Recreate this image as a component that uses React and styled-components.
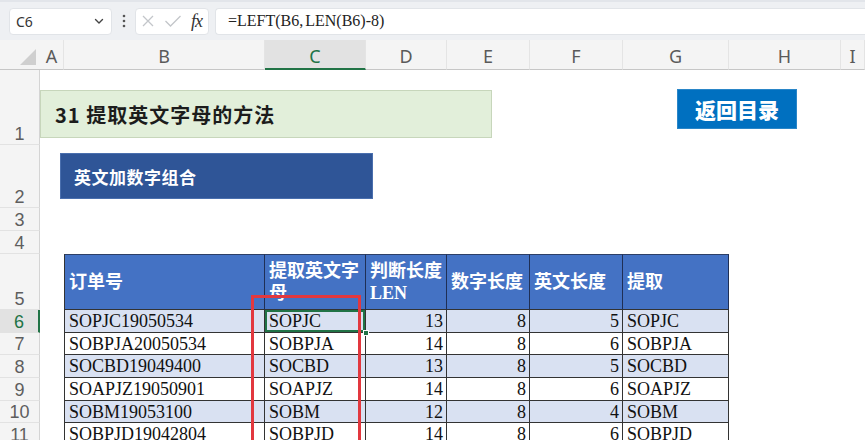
import React from 'react';
import styled, { createGlobalStyle, css } from 'styled-components';

const GlobalStyle = createGlobalStyle`
  * { box-sizing: border-box; }
  html, body { margin: 0; padding: 0; background: #ffffff; }
  body { width: 865px; height: 440px; overflow: hidden; }
`;

const UI_FONT = `"Noto Sans", "Liberation Sans", "Noto Sans CJK SC", sans-serif`;
const NUM_FONT = `"Liberation Sans", "Noto Sans", sans-serif`;
const CELL_FONT = `"Liberation Serif", "Noto Sans CJK SC", serif`;
const CJK_FONT = `"Noto Sans CJK SC", "Noto Sans", sans-serif`;

const COLS = ['A', 'B', 'C', 'D', 'E', 'F', 'G', 'H', 'I'];
const COL_WIDTHS = [24, 201, 101, 81, 83, 93, 106, 112];
const ROW_HEIGHTS = [75, 63, 23, 23, 56, 23, 22, 23, 23, 22, 23, 23];

const Page = styled.div`
  width: 865px;
  height: 440px;
  display: flex;
  flex-direction: column;
  overflow: hidden;
  background: #ffffff;
`;

const TopBar = styled.div`
  height: 40px;
  flex: none;
  display: flex;
  align-items: center;
  padding-left: 9px;
  background: #eef0f3;
  border-top: 2px solid #e2e5ea;
`;

const Field = styled.div`
  height: 27px;
  background: #ffffff;
  border: 1px solid #e1e4e8;
  border-radius: 4px;
  display: flex;
  align-items: center;
`;

const NameBox = styled(Field)`
  width: 103px;
  padding: 0 6px 0 6px;
  justify-content: space-between;
  font-family: ${UI_FONT};
  font-size: 14px;
  color: #333;
`;

const Dots = styled.div`
  width: 23px;
  display: flex;
  justify-content: center;
`;

const FuncBox = styled(Field)`
  width: 74px;
  padding: 0 5px;
  justify-content: space-between;
`;

const Fx = styled.span`
  font-family: "Liberation Serif", serif;
  font-style: italic;
  font-size: 18px;
  color: #333;
  margin-right: 1px;
  letter-spacing: -1px;
`;

const FormulaBox = styled(Field)`
  flex: 1;
  margin-left: 6px;
  border-radius: 4px 0 0 4px;
  border-right: none;
  padding-left: 12px;
  font-family: "Liberation Serif", serif;
  font-size: 16px;
  color: #222;
  word-spacing: -2px;
`;

const Sheet = styled.div`
  position: relative;
  flex: 1;
  display: grid;
  grid-template-columns: 40px ${COL_WIDTHS.map((w) => `${w}px`).join(' ')} 1fr;
  grid-template-rows: 30px ${ROW_HEIGHTS.map((h) => `${h}px`).join(' ')};
  background: #ffffff;
`;

const Corner = styled.div`
  background: #f4f4f4;
  border-bottom: 1px solid #c6c6c6;
  display: flex;
  align-items: flex-end;
  justify-content: flex-end;
  padding: 0 4px 4px 0;
`;

const ColHead = styled.div`
  background: ${({ $active }) => ($active ? '#e2e2e2' : '#f4f4f4')};
  border-bottom: ${({ $active }) => ($active ? '2px solid #217346' : '1px solid #c6c6c6')};
  border-right: 1px solid #e4e4e4;
  display: flex;
  align-items: center;
  justify-content: center;
  font-family: ${UI_FONT};
  font-size: 18px;
  color: ${({ $active }) => ($active ? '#217346' : '#5a5a5a')};
  padding-top: 3px;
`;

const RowHead = styled.div`
  background: ${({ $active }) => ($active ? '#e2e2e2' : '#f4f4f4')};
  border-right: ${({ $active }) => ($active ? '2px solid #217346' : '1px solid #d4d4d4')};
  border-bottom: 1px solid #e2e2e2;
  display: flex;
  align-items: flex-end;
  justify-content: center;
  font-family: ${NUM_FONT};
  font-size: 18px;
  line-height: 20px;
  color: ${({ $active }) => ($active ? '#217346' : '#5e5e5e')};
`;

const Blank = styled.div``;

const Cell = styled.div`
  position: relative;
  display: flex;
  align-items: center;
  padding: 0 3px 0 4px;
  font-family: ${CELL_FONT};
  font-size: 18px;
  line-height: 20px;
  color: #111;
  white-space: nowrap;
  border-right: 1px solid #333;
  border-bottom: 1px solid #333;
  background: ${({ $shade }) => ($shade ? '#d9e1f2' : '#ffffff')};
  justify-content: ${({ $num }) => ($num ? 'flex-end' : 'flex-start')};
  ${({ $first }) => $first && css`border-left: 1px solid #333;`}
  ${({ $head }) => $head && css`
    background: #4472c4;
    color: #ffffff;
    font-weight: bold;
    white-space: normal;
    line-height: 22px;
    border-top: 1px solid #2d3f66;
    border-right-color: #1f2f55;
    justify-content: flex-start;
  `}
  ${({ $selected }) => $selected && css`
    box-shadow: inset 0 0 0 2px #217346;
  `}
`;

const Handle = styled.span`
  position: absolute;
  right: -4px;
  bottom: -4px;
  width: 6px;
  height: 6px;
  background: #217346;
  border: 1px solid #ffffff;
  z-index: 3;
`;

const TitleShape = styled.div`
  position: absolute;
  left: 40px;
  top: 50px;
  width: 452px;
  height: 48px;
  background: #e2efda;
  border: 1px solid #c7d6bb;
  display: flex;
  align-items: center;
  padding-left: 14px;
  font-family: ${CJK_FONT};
  font-weight: bold;
  font-size: 20px;
  letter-spacing: 1px;
  color: #1c1c1c;
`;

const SectionShape = styled.div`
  position: absolute;
  left: 60px;
  top: 113px;
  width: 313px;
  height: 46px;
  background: #2f5597;
  border: 1px solid #4a6fae;
  display: flex;
  align-items: center;
  padding-left: 13px;
  font-family: ${CJK_FONT};
  font-weight: bold;
  font-size: 17px;
  letter-spacing: 0.5px;
  color: #ffffff;
`;

const BackButton = styled.div`
  position: absolute;
  left: 677px;
  top: 49px;
  width: 120px;
  height: 40px;
  background: #0070c0;
  border: 1px solid #2a86c8;
  display: flex;
  align-items: center;
  justify-content: center;
  font-family: ${CJK_FONT};
  font-weight: 900;
  font-size: 21px;
  color: #ffffff;
`;

const Highlight = styled.div`
  position: absolute;
  left: 251px;
  top: 255px;
  width: 110px;
  height: 200px;
  border: 3px solid #e2383f;
  pointer-events: none;
  z-index: 4;
`;

const HEADERS = [
  { text: '订单号' },
  { text: <>提取英文字<br />母</> },
  { text: <>判断长度<br />LEN</> },
  { text: '数字长度' },
  { text: '英文长度' },
  { text: '提取' },
];

const ROWS = [
  ['SOPJC19050534', 'SOPJC', 13, 8, 5, 'SOPJC'],
  ['SOBPJA20050534', 'SOBPJA', 14, 8, 6, 'SOBPJA'],
  ['SOCBD19049400', 'SOCBD', 13, 8, 5, 'SOCBD'],
  ['SOAPJZ19050901', 'SOAPJZ', 14, 8, 6, 'SOAPJZ'],
  ['SOBM19053100', 'SOBM', 12, 8, 4, 'SOBM'],
  ['SOBPJD19042804', 'SOBPJD', 14, 8, 6, 'SOBPJD'],
  ['SOCBD19050211', 'SOCBD', 13, 8, 5, 'SOCBD'],
];

function Chevron() {
  return (
    <svg width="12" height="12" viewBox="0 0 12 12">
      <path d="M2.5 4.5 L6 8 L9.5 4.5" fill="none" stroke="#444" strokeWidth="1.4" strokeLinecap="round" strokeLinejoin="round" />
    </svg>
  );
}

function VDots() {
  return (
    <svg width="4" height="14" viewBox="0 0 4 14">
      <circle cx="2" cy="2" r="1.3" fill="#555" />
      <circle cx="2" cy="7" r="1.3" fill="#555" />
      <circle cx="2" cy="12" r="1.3" fill="#555" />
    </svg>
  );
}

function Cross() {
  return (
    <svg width="14" height="14" viewBox="0 0 14 14">
      <path d="M2 2 L12 12 M12 2 L2 12" stroke="#c3c6ca" strokeWidth="1.3" fill="none" />
    </svg>
  );
}

function Check() {
  return (
    <svg width="18" height="14" viewBox="0 0 18 14">
      <path d="M1.5 7 L6.5 12 L16.5 2" stroke="#c3c6ca" strokeWidth="1.3" fill="none" />
    </svg>
  );
}

function CornerMark() {
  return (
    <svg width="16" height="16" viewBox="0 0 16 16">
      <polygon points="16,0 16,16 0,16" fill="#cfcfcf" />
    </svg>
  );
}

function tableRow(rowNum) {
  // rows 5..11 hold the table in columns B..G
  if (rowNum === 5) {
    return HEADERS.map((h, i) => (
      <Cell key={i} $head $first={i === 0}>{h.text}</Cell>
    ));
  }
  const data = ROWS[rowNum - 6];
  const shade = rowNum % 2 === 0;
  return data.map((v, i) => (
    <Cell
      key={i}
      $first={i === 0}
      $shade={shade}
      $num={typeof v === 'number'}
      $selected={rowNum === 6 && i === 1}
    >
      {v}
      {rowNum === 6 && i === 1 && <Handle />}
    </Cell>
  ));
}

export default function App() {
  return (
    <Page>
      <GlobalStyle />
      <TopBar>
        <NameBox>
          <span>C6</span>
          <Chevron />
        </NameBox>
        <Dots><VDots /></Dots>
        <FuncBox>
          <Cross />
          <Check />
          <Fx>fx</Fx>
        </FuncBox>
        <FormulaBox>=LEFT(B6, LEN(B6)-8)</FormulaBox>
      </TopBar>

      <Sheet>
        <Corner><CornerMark /></Corner>
        {COLS.map((c) => (
          <ColHead key={c} $active={c === 'C'}>{c}</ColHead>
        ))}

        {ROW_HEIGHTS.map((_, idx) => {
          const rowNum = idx + 1;
          const inTable = rowNum >= 5;
          return (
            <React.Fragment key={rowNum}>
              <RowHead $active={rowNum === 6}>{rowNum}</RowHead>
              <Blank />
              {inTable ? tableRow(rowNum) : COLS.slice(1, 7).map((c) => <Blank key={c} />)}
              <Blank />
              <Blank />
            </React.Fragment>
          );
        })}

        <TitleShape>31 提取英文字母的方法</TitleShape>
        <SectionShape>英文加数字组合</SectionShape>
        <BackButton>返回目录</BackButton>
        <Highlight />
      </Sheet>
    </Page>
  );
}
